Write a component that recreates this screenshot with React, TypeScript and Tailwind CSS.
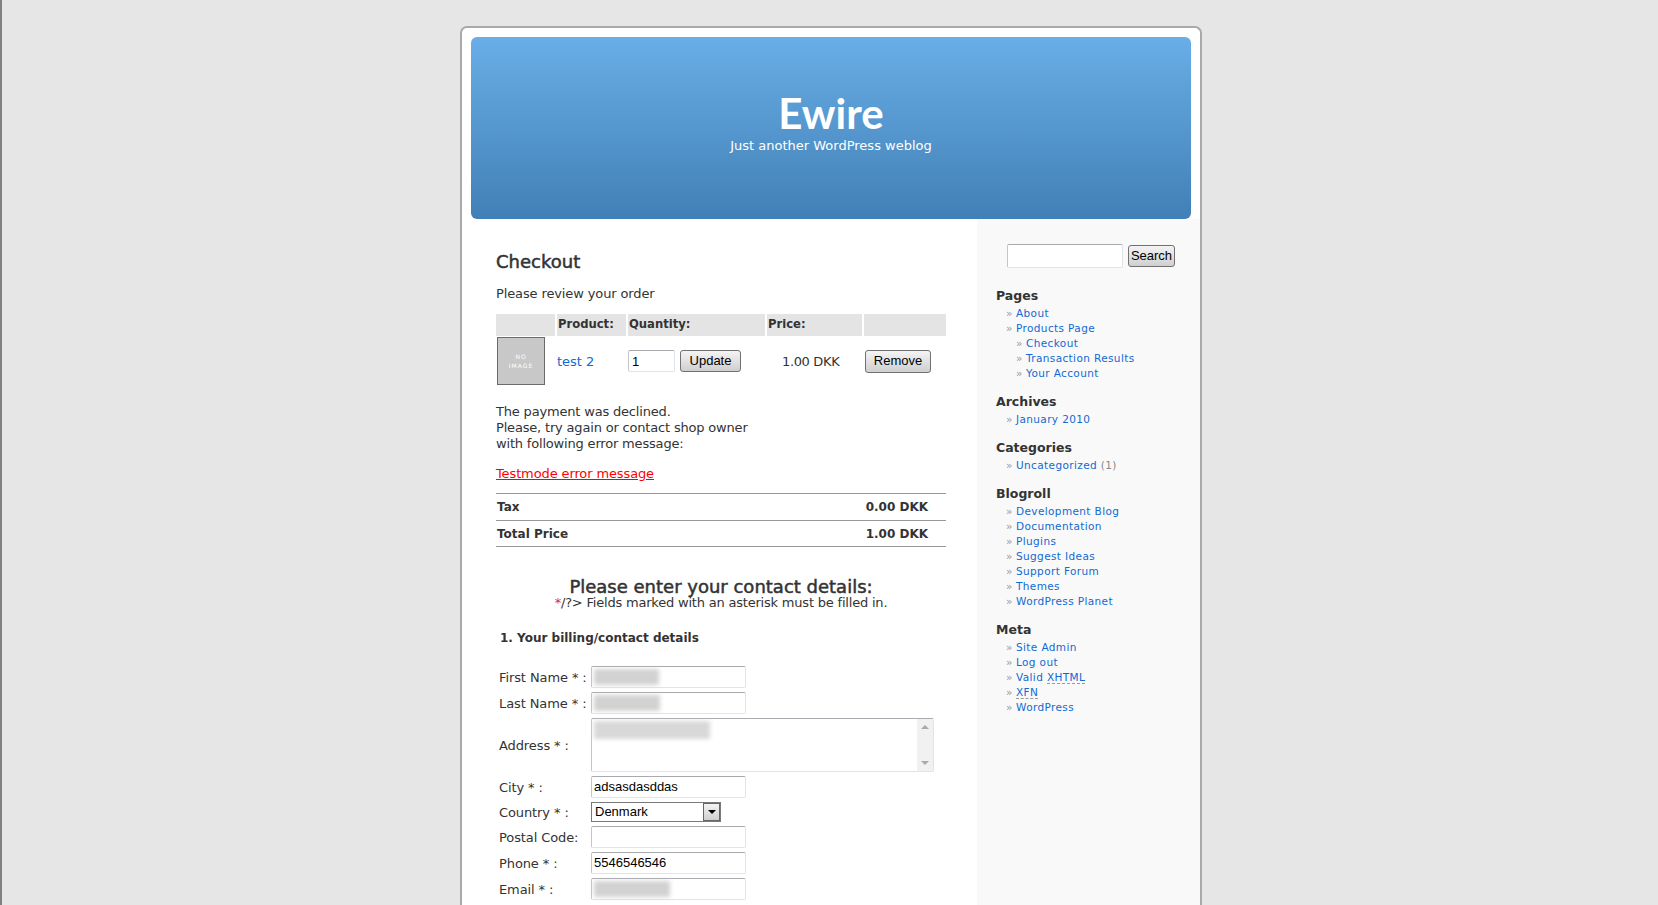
import React from "react";

const sans = "font-['DejaVu_Sans',Verdana,sans-serif]";
const arial = "font-['Liberation_Sans',Arial,sans-serif]";

function Field({ label, value, blur }: { label: string; value?: string; blur?: number }) {
  return (
    <div className="flex items-center h-[22px] mb-[4px]">
      <div className="w-[95px] pl-[3px] pt-[2px] text-[13px] tracking-[-0.1px] whitespace-pre">{label}</div>
      <div className={`relative w-[155px] h-[22px] bg-white border border-[#e1e4ea] border-t-[#a9a9b0] border-l-[#c4c4cc] rounded-[2px] pl-[2px] text-[13px] leading-[20px] text-black ${arial}`}>
        {value}
        {blur ? <span className="absolute left-[2px] top-[2px] h-[16px] bg-[#d2d2d2] blur-[2px]" style={{ width: blur }} /> : null}
      </div>
    </div>
  );
}

function Widget({ title, items }: { title: string; items: React.ReactNode[] }) {
  return (
    <div className="mb-[12px]">
      <h2 className="text-[12.5px] font-bold leading-[18px] mb-[1px] text-[#333]">{title}</h2>
      <ul>{items}</ul>
    </div>
  );
}

function Li({ children, sub }: { children: React.ReactNode; sub?: boolean }) {
  return (
    <li className={`flex h-[15px] leading-[15px] text-[10.5px] tracking-[0.38px] text-[#1269d3] ${sub ? "pl-[20px]" : "pl-[10px]"}`}>
      <span className="w-[10px] text-[#999]">»</span>
      <span className="whitespace-pre">{children}</span>
    </li>
  );
}

const headCell = "h-[22px] bg-[#e4e4e4] pl-[1px] font-bold text-[11.6px] leading-[20px]";
const btn = "rounded-[3px] border border-[#707070] bg-gradient-to-b from-[#f4f4f4] to-[#cfcfcf] text-black";

export default function App() {
  return (
    <div className={`h-screen overflow-hidden bg-[#e6e6e6] border-l-2 border-[#808080] text-[#333] ${sans}`}>
      <div className="ml-[458px] pt-[26px] w-[742px]">
        <div className="h-[1000px] bg-white border-2 border-b-0 border-[#a9a9a9] rounded-t-[7px]">
          <header className="mx-[9px] mt-[9px] h-[182px] rounded-[6px] bg-gradient-to-b from-[#69aee7] to-[#4180b6] text-white text-center pt-[51px]">
            <h1 className="font-['Lato',sans-serif] font-bold text-[42px] leading-[50px]">Ewire</h1>
            <p className="text-[13px] leading-[16px]">Just another WordPress weblog</p>
          </header>
          <div className="flex h-[800px]">
            <main className="w-[515px] pl-[34px] pr-[31px] pt-[32px]">
              <h2 className="text-[18px] leading-[22px] text-[#333] [-webkit-text-stroke:0.5px_#333]">Checkout</h2>
              <p className="text-[13px] leading-[16px] mt-[13px] tracking-[-0.12px]">Please review your order</p>
              <div className="mt-[12px] grid grid-cols-[59px_69px_137px_95px_82px] gap-x-[2px] text-[13px]">
                <div className={headCell} />
                <div className={headCell}>Product:</div>
                <div className={headCell}>Quantity:</div>
                <div className={headCell}>Price:</div>
                <div className={headCell} />
                <div className="pt-[1px] pl-[1px] h-[50px]">
                  <div className="w-[48px] h-[48px] bg-[#c8c8c8] border border-[#6a6a6a] flex flex-col items-center justify-center text-white text-[6px] leading-[9px] tracking-[1px]">
                    <span>NO</span>
                    <span>IMAGE</span>
                  </div>
                </div>
                <div className="flex items-center text-[#1269d3] pt-[1px]">test 2</div>
                <div className="flex items-center">
                  <input readOnly value="1" className={`w-[47px] h-[22px] bg-white border border-[#dfe3ea] border-t-[#a9a9b0] border-l-[#c4c4cc] rounded-[2px] pl-[3px] text-[13px] text-black outline-none ${arial}`} />
                  <button className={`ml-[5px] w-[61px] h-[22px] text-[13px] ${btn} ${arial}`}>Update</button>
                </div>
                <div className="flex items-center pl-[15px] pt-[1px] tracking-[-0.35px]">1.00 DKK</div>
                <div className="flex items-center">
                  <button className={`ml-[1px] w-[66px] h-[23px] text-[13px] ${btn} ${arial}`}>Remove</button>
                </div>
              </div>
              <p className="mt-[18px] text-[13px] leading-[16px] tracking-[-0.18px]">The payment was declined.<br />Please, try again or contact shop owner<br />with following error message:</p>
              <p className="mt-[14px] text-[13px] leading-[16px] tracking-[-0.12px] text-[#ff0000] underline">Testmode error message</p>
              <div className="mt-[11px] border-t border-[#999] h-[27px] flex justify-between items-center font-bold text-[12px] pl-[1px] pr-[18px]"><span>Tax</span><span>0.00 DKK</span></div>
              <div className="border-t border-b border-[#999] h-[27px] flex justify-between items-center font-bold text-[12px] pl-[1px] pr-[18px]"><span>Total Price</span><span>1.00 DKK</span></div>
              <div className="text-center mt-[30px]">
                <h3 className="text-[18px] leading-[19px] text-[#333] [-webkit-text-stroke:0.5px_#333]">Please enter your contact details:</h3>
                <p className="text-[13px] leading-[13px] tracking-[-0.2px]"><span className="text-[#c33]">*</span>/?&gt; Fields marked with an asterisk must be filled in.</p>
              </div>
              <h4 className="mt-[21px] pl-[4px] text-[12px] font-bold leading-[16px] mb-[20px]">1. Your billing/contact details</h4>
              <Field label="First Name * :" blur={65} />
              <Field label="Last Name * :" blur={66} />
              <div className="flex items-center h-[54px] mb-[4px]">
                <div className="w-[95px] pl-[3px] pt-[2px] text-[13px] tracking-[-0.1px]">Address * :</div>
                <div className="relative w-[343px] h-[54px] bg-white border border-[#e1e4ea] border-t-[#a9a9b0] border-l-[#c4c4cc] rounded-[2px] flex justify-end">
                  <span className="absolute left-[2px] top-[2px] w-[116px] h-[18px] bg-[#d8d8d8] blur-[2px]" />
                  <div className="w-[16px] bg-[#f1f1f1] flex flex-col justify-between items-center py-[6px]">
                    <span className="w-0 h-0 border-x-[4px] border-x-transparent border-b-[4px] border-b-[#aaa]" />
                    <span className="w-0 h-0 border-x-[4px] border-x-transparent border-t-[4px] border-t-[#aaa]" />
                  </div>
                </div>
              </div>
              <Field label="City * :" value="adsasdasddas" />
              <div className="flex items-center h-[20px] mb-[4px]">
                <div className="w-[95px] pl-[3px] pt-[2px] text-[13px] tracking-[-0.1px]">Country * :</div>
                <div className={`w-[130px] h-[20px] border border-[#7a7a7a] bg-white flex items-center justify-between pl-[3px] text-[13px] text-black ${arial}`}>
                  <span>Denmark</span>
                  <span className="w-[17px] h-[18px] border border-[#666] bg-gradient-to-b from-[#f4f4f4] to-[#cfcfcf] flex items-center justify-center">
                    <span className="w-0 h-0 border-x-[4px] border-x-transparent border-t-[4px] border-t-black" />
                  </span>
                </div>
              </div>
              <Field label="Postal Code:" />
              <Field label="Phone * :" value="5546546546" />
              <Field label="Email * :" blur={76} />
            </main>
            <aside className="w-[223px] bg-[#f9f9f9] pt-[25px] pl-[19px]">
              <div className="flex items-center h-[24px] pl-[11px] mb-[19px]">
                <input readOnly className="w-[116px] h-[24px] bg-white border border-[#e1e4ea] border-t-[#a9a9b0] border-l-[#c4c4cc] rounded-[2px] outline-none" />
                <button className={`ml-[5px] w-[47px] h-[22px] text-[13px] ${btn} ${arial}`}>Search</button>
              </div>
              <Widget title="Pages" items={[
                <Li key="a">About</Li>,
                <Li key="b">Products Page</Li>,
                <Li key="c" sub>Checkout</Li>,
                <Li key="d" sub>Transaction Results</Li>,
                <Li key="e" sub>Your Account</Li>,
              ]} />
              <Widget title="Archives" items={[<Li key="a">January 2010</Li>]} />
              <Widget title="Categories" items={[<Li key="a">Uncategorized <span className="text-[#888]">(1)</span></Li>]} />
              <Widget title="Blogroll" items={["Development Blog", "Documentation", "Plugins", "Suggest Ideas", "Support Forum", "Themes", "WordPress Planet"].map((t) => <Li key={t}>{t}</Li>)} />
              <Widget title="Meta" items={[
                <Li key="a">Site Admin</Li>,
                <Li key="b">Log out</Li>,
                <Li key="c">Valid <abbr className="no-underline border-b border-dashed border-[#999]">XHTML</abbr></Li>,
                <Li key="d"><abbr className="no-underline border-b border-dashed border-[#999]">XFN</abbr></Li>,
                <Li key="e">WordPress</Li>,
              ]} />
            </aside>
          </div>
        </div>
      </div>
    </div>
  );
}
